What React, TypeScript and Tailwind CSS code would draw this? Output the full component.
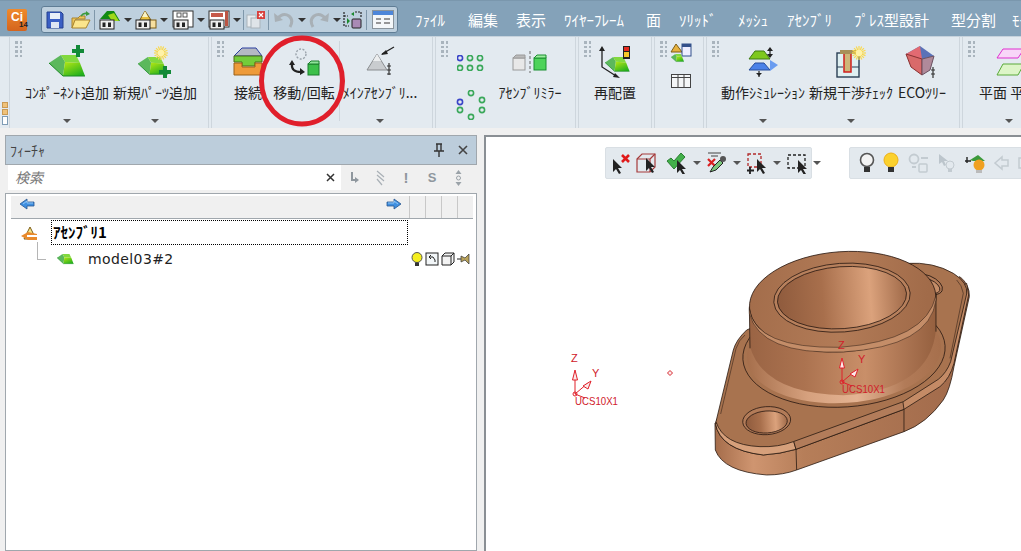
import React from "react";

const JP = { fontFamily: '"Noto Sans CJK JP", "Liberation Sans", sans-serif' };

function Caret({ dark }: { dark?: boolean }) {
  return <span className={`inline-block w-0 h-0 border-x-[4px] border-t-[4px] border-x-transparent ${dark ? "border-t-[#333]" : "border-t-[#555]"}`} />;
}

function Grip() {
  return (
    <div className="flex-none w-[7px] mt-[4px] ml-[5px] mr-[1px] grid grid-cols-2 gap-x-[2px] gap-y-[2px] content-start h-[18px]">
      {[0, 1, 2, 3, 4, 5, 6, 7].map((i) => (
        <span key={i} className="w-[2.5px] h-[2.5px] bg-[#a9b4bd]" />
      ))}
    </div>
  );
}

function Svg({ w, h, children, className }: { w: number; h: number; children: React.ReactNode; className?: string }) {
  return (
    <svg width={w} height={h} viewBox={`0 0 ${w} ${h}`} className={`flex-none ${className ?? ""}`}>
      {children}
    </svg>
  );
}

function Defs() {
  return (
    <svg width="0" height="0" className="absolute">
      <defs>
        <linearGradient id="gr" x1="0" y1="0" x2="0.7" y2="1">
          <stop offset="0" stopColor="#b8e814" />
          <stop offset="1" stopColor="#22b01c" />
        </linearGradient>
        <linearGradient id="cyl" x1="0" x2="1" y1="0" y2="0">
          <stop offset="0" stopColor="#9a6444" />
          <stop offset="0.3" stopColor="#ac7350" />
          <stop offset="0.62" stopColor="#c98f69" />
          <stop offset="0.85" stopColor="#a97250" />
          <stop offset="1" stopColor="#95603f" />
        </linearGradient>
        <linearGradient id="top" x1="0" x2="1" y1="0" y2="0.1">
          <stop offset="0" stopColor="#a26c4a" />
          <stop offset="0.55" stopColor="#b27b57" />
          <stop offset="1" stopColor="#a16b49" />
        </linearGradient>
        <linearGradient id="bore" x1="0" x2="1" y1="0" y2="0">
          <stop offset="0" stopColor="#8f5b3d" />
          <stop offset="0.35" stopColor="#a86f4c" />
          <stop offset="0.72" stopColor="#dba27c" />
          <stop offset="1" stopColor="#a06a49" />
        </linearGradient>
        <linearGradient id="fl" x1="0" x2="1" y1="0" y2="0">
          <stop offset="0" stopColor="#a66f4c" />
          <stop offset="0.3" stopColor="#d6a17e" />
          <stop offset="0.55" stopColor="#e4b392" />
          <stop offset="0.8" stopColor="#b27b58" />
          <stop offset="1" stopColor="#a66f4c" />
        </linearGradient>
        <linearGradient id="sd" x1="0" x2="1" y1="0" y2="0">
          <stop offset="0" stopColor="#a56d4b" />
          <stop offset="0.15" stopColor="#cf9570" />
          <stop offset="0.35" stopColor="#b67e59" />
          <stop offset="1" stopColor="#a0694a" />
        </linearGradient>
      </defs>
    </svg>
  );
}

function Wedge({ x = 0, y = 0, s = 1 }: { x?: number; y?: number; s?: number }) {
  return (
    <g transform={`translate(${x} ${y}) scale(${s})`}>
      <polygon points="0,8 12,0 16,7 14,21" fill="#5cb85c" />
      <polygon points="12,0 27,0 31,8 16,7" fill="#82d93e" />
      <polygon points="16,7 31,8 36,21 14,21" fill="url(#gr)" />
      <path d="M0 8L14 21H36" fill="none" stroke="#1a8a24" strokeWidth="1" />
    </g>
  );
}

function Plus({ x, y, s = 11 }: { x: number; y: number; s?: number }) {
  const t = s / 3;
  return <path d={`M${x - t / 2} ${y - s / 2}h${t}v${(s - t) / 2}h${(s - t) / 2}v${t}h${-(s - t) / 2}v${(s - t) / 2}h${-t}v${-(s - t) / 2}h${-(s - t) / 2}v${-t}h${(s - t) / 2}z`} fill="#128a38" />;
}

function Star({ x, y, r = 7 }: { x: number; y: number; r?: number }) {
  const lines = [0, 45, 90, 135, 22, 67, 112, 157];
  return (
    <g>
      {lines.map((a) => {
        const c = Math.cos((a * Math.PI) / 180) * r;
        const s = Math.sin((a * Math.PI) / 180) * r;
        return <line key={a} x1={x - c} y1={y - s} x2={x + c} y2={y + s} stroke="#f9d94f" strokeWidth="1.2" />;
      })}
      <circle cx={x} cy={y} r={r * 0.45} fill="#fff2a8" />
    </g>
  );
}

function HH({ x, y }: { x: number; y: number }) {
  return (
    <g>
      <rect x={x} y={y} width="14" height="9" fill="#eee" stroke="#222" />
      <rect x={x + 2.5} y={y + 2.5} width="3" height="4.5" fill="#222" />
      <rect x={x + 8} y={y + 2.5} width="3" height="4.5" fill="#222" />
    </g>
  );
}

function RBtn({ w, label, icon, caret, labelClass }: { w: string; label: string; icon: React.ReactNode; caret?: boolean; labelClass?: string }) {
  return (
    <div className={`flex-none flex flex-col items-center h-full ${w}`}>
      <div className="h-[40px] mt-[5px] flex items-center justify-center">{icon}</div>
      <div className={`mt-[-2px] h-[24px] leading-[24px] text-[14px] text-[#222] whitespace-nowrap ${labelClass ?? ""}`} style={JP}>
        {label}
      </div>
      {caret && <div className="mt-[15px] flex"><Caret /></div>}
    </div>
  );
}

function Group({ w, children }: { w: string; children: React.ReactNode }) {
  return (
    <div className={`flex-none flex h-full border-x border-[#ced6dd] bg-[#e3eaf0] ${w}`}>
      <Grip />
      {children}
    </div>
  );
}

function Dots({ pts }: { pts: [number, number, string][] }) {
  return (
    <>
      {pts.map(([x, y, c], i) => (
        <circle key={i} cx={x} cy={y} r="2.6" fill="none" stroke={c} strokeWidth="1.6" />
      ))}
    </>
  );
}

function Sep({ className }: { className?: string }) {
  return <span className={`flex-none w-px h-[20px] bg-[#7f97aa] ${className ?? "ml-[3px]"}`} />;
}

function Carets() {
  return (
    <span className="ml-[3px] flex">
      <Caret dark />
    </span>
  );
}

function QuickBar() {
  return (
    <div className="ml-[14px] flex items-center w-[357px] h-[27px] rounded-[3px] border border-[#5f7d95] bg-[#bed0de] pl-[4px]">
      <Svg w={18} h={18}>
        <path d="M1 1h14l2 2v14H1z" fill="#3a5fc4" stroke="#25408f" />
        <rect x="4" y="2" width="10" height="6" fill="#e8eef8" />
        <rect x="5" y="11" width="8" height="6" fill="#dfe6f3" />
      </Svg>
      <Svg w={20} h={18} className="ml-[7px]">
        <path d="M1 7h6l2-2h5v3H5L1 17z" fill="#eec65a" stroke="#a9842e" />
        <path d="M4 9h15l-4 8H1z" fill="#fbe58c" stroke="#a9842e" />
        <path d="M10 5Q13 1 17 3" stroke="#3c9a3c" strokeWidth="1.6" fill="none" />
        <path d="M15 0l4 3-4 2z" fill="#3c9a3c" />
      </Svg>
      <Sep />
      <Svg w={22} h={20} className="ml-[4px]">
        <polygon points="1,9 8,1 15,1 21,11 14,11 10,9" fill="#118a14" />
        <polygon points="9,5 15,3 20,11 13,11" fill="#9fd81a" />
        <HH x={1} y={10} />
      </Svg>
      <Carets />
      <Svg w={22} h={20} className="ml-[3px]">
        <polygon points="10,1 18,13 3,13" fill="#e8c040" stroke="#7d5d17" />
        <polygon points="10,1 13,7 7,7" fill="#f8f3c8" />
        <rect x="14" y="10" width="7" height="8" fill="#f6dfa0" stroke="#7d5d17" />
        <HH x={1} y={10} />
      </Svg>
      <Carets />
      <Svg w={22} h={20} className="ml-[4px]">
        <rect x="1" y="1" width="20" height="16" fill="#fff" stroke="#333" />
        <rect x="5" y="3" width="4" height="4" fill="#fff" stroke="#555" />
        <rect x="11" y="3" width="4" height="4" fill="#fff" stroke="#555" />
        <HH x={2} y={10} />
      </Svg>
      <Carets />
      <Svg w={22} h={20} className="ml-[3px]">
        <rect x="1" y="1" width="20" height="16" fill="#fff" stroke="#333" />
        <rect x="3" y="3" width="12" height="4" fill="#c65a4a" />
        <rect x="17" y="1" width="3" height="15" fill="#b54" />
        <HH x={2} y={10} />
      </Svg>
      <Carets />
      <Sep className="ml-[2px]" />
      <Svg w={19} h={19} className="ml-[2px]">
        <rect x="1" y="5" width="9" height="12" fill="#e9edf0" stroke="#aab3ba" />
        <rect x="5" y="8" width="9" height="10" fill="#dfe4e8" stroke="#aab3ba" />
        <rect x="11" y="1" width="8" height="8" fill="#d8403c" />
        <path d="M13 3l4 4M17 3l-4 4" stroke="#fff" strokeWidth="1.2" />
      </Svg>
      <Sep />
      <Svg w={22} h={18} className="ml-[4px]">
        <path d="M4 8Q10 1 16 5Q21 9 17 16" fill="none" stroke="#a8b0b6" strokeWidth="3" />
        <path d="M1 2l1 9 8-2z" fill="#a8b0b6" />
      </Svg>
      <Carets />
      <Svg w={22} h={18} className="ml-[2px]">
        <path d="M18 8Q12 1 6 5Q1 9 5 16" fill="none" stroke="#a8b0b6" strokeWidth="3" />
        <path d="M21 2l-1 9-8-2z" fill="#a8b0b6" />
      </Svg>
      <Carets />
      <Svg w={21} h={20} className="ml-[1px]">
        <path d="M2 6h4M2 2v14h5M13 2h6v5" fill="none" stroke="#222" strokeWidth="1.2" strokeDasharray="2 1" />
        <rect x="10" y="9" width="9" height="9" rx="1" fill="#a98ab5" stroke="#222" />
        <path d="M5 8l3 3-3 3zM12 2l-3 2 3 2z" fill="#1a8a2c" />
      </Svg>
      <Sep className="ml-[3px]" />
      <Svg w={22} h={19} className="ml-[5px]">
        <rect x="0.5" y="0.5" width="21" height="18" fill="#f4f7f9" stroke="#8a949c" />
        <rect x="1" y="1" width="20" height="4" fill="#4d86d9" />
        <path d="M4 9h5M12 9h6M4 13h5M12 13h6" stroke="#777" strokeWidth="1.4" />
      </Svg>
    </div>
  );
}

function Ribbon() {
  return (
    <div className="relative flex h-[92px] pl-[9px] gap-[2px] bg-[#e3eaf0] border-t border-[#c6d2dc]">
      <div className="absolute left-[2px] bottom-0 w-[6px] h-[26px] flex flex-col gap-px">
        <span className="h-[6px] bg-[#f0c27a] border border-[#c99a55]" />
        <span className="h-[6px] bg-[#f0c27a] border border-[#c99a55]" />
        <span className="h-[9px] bg-white border border-[#7f9cb5]" />
      </div>
      <Group w="w-[200px]">
        <RBtn w="w-[88px]" label="ｺﾝﾎﾟｰﾈﾝﾄ追加" caret icon={
          <Svg w={40} h={38}>
            <Wedge x={2} y={12} />
            <Plus x={31} y={8} s={12} />
          </Svg>
        } />
        <RBtn w="w-[88px]" label="新規ﾊﾟｰﾂ追加" caret icon={
          <Svg w={36} h={38}>
            <Wedge x={1} y={14} s={0.82} />
            <Star x={24} y={10} r={7} />
            <Plus x={28} y={29} s={12} />
          </Svg>
        } />
      </Group>
      <Group w="w-[222px]">
        <div className="flex-none w-[1px]" />
        <RBtn w="w-[44px]" label="接続" icon={
          <Svg w={30} h={30}>
            <path d="M1 9L9 1h14l6 8-6 0H5z" fill="#b5b9c2" stroke="#2a3fa0" />
            <path d="M1 9h28v6h-7v4H9v-4H1z" fill="#73cc3a" stroke="#4a6d16" />
            <path d="M1 16h8v4h13v-4h7v12H1z" fill="#ee9b3a" stroke="#9a6018" />
          </Svg>
        } />
        <RBtn w="w-[68px]" label="移動/回転" icon={
          <Svg w={32} h={30}>
            <circle cx="13" cy="7" r="5" fill="none" stroke="#9aa3ab" strokeWidth="1.4" strokeDasharray="2 1.5" />
            <path d="M4 17Q3 25 13 25" fill="none" stroke="#222" strokeWidth="2.2" />
            <path d="M1 18l3-5 3 5zM12 21v7l5-3z" fill="#222" />
            <rect x="20" y="17" width="11" height="11" fill="#3cc04a" stroke="#1a7f2c" />
            <polygon points="20,17 23,14 31,14 31,17" fill="#8fe39a" stroke="#1a7f2c" />
          </Svg>
        } />
        <div className="flex-none w-px h-[80px] mt-[4px] bg-[#ced6dd] ml-[1px]" />
        <RBtn w="w-[80px]" label="ﾒｲﾝｱｾﾝﾌﾞﾘ..." caret icon={
          <Svg w={32} h={32}>
            <polygon points="13,8 23,24 3,24" fill="#c9cccf" stroke="#8a8d90" />
            <polygon points="13,8 17,15 9,15" fill="#eceeef" />
            <path d="M30 1L18 8" stroke="#222" strokeWidth="1.3" />
            <path d="M17 9l5-5 2 4z" fill="#222" />
            <path d="M25 17v12M23 20h4M23 24h4M23 28h4" stroke="#333" strokeWidth="1.2" fill="none" />
          </Svg>
        } />
      </Group>
      <Group w="w-[141px]">
        <div className="flex-none w-[46px] ml-[1px] flex flex-col items-center pt-[18px] gap-[19px]">
          <Svg w={32} h={16}>
            <Dots pts={[[3, 3, "#3a45c8"], [13, 3, "#3aa85a"], [23, 3, "#3aa85a"], [3, 13, "#3aa85a"], [13, 13, "#3aa85a"], [23, 13, "#3aa85a"]]} />
          </Svg>
          <Svg w={34} h={30}>
            <Dots pts={[[15, 3, "#3aa85a"], [4, 12, "#3a45c8"], [26, 10, "#3aa85a"], [4, 20, "#3aa85a"], [26, 20, "#3aa85a"], [15, 27, "#3aa85a"]]} />
          </Svg>
        </div>
        <RBtn w="w-[68px]" label="ｱｾﾝﾌﾞﾘﾐﾗｰ" labelClass="text-[12.5px]" icon={
          <Svg w={36} h={24}>
            <rect x="1" y="8" width="12" height="12" fill="#e8e8e8" stroke="#9a9a9a" />
            <polygon points="1,8 4,5 13,5 13,8" fill="#bbb" stroke="#9a9a9a" />
            <path d="M18 1v22" stroke="#666" strokeDasharray="3 2" />
            <rect x="22" y="8" width="12" height="12" fill="#4ed35a" stroke="#1a8f30" />
            <polygon points="22,8 25,5 34,5 34,8" fill="#9ded9f" stroke="#1a8f30" />
          </Svg>
        } />
      </Group>
      <Group w="w-[74px]">
        <RBtn w="w-[46px]" label="再配置" icon={
          <Svg w={34} h={34}>
            <path d="M4 4v18l14 9" fill="none" stroke="#222" strokeWidth="1.3" />
            <path d="M4 1l3 5H1zM22 33l-7-1 2-4z" fill="#222" />
            <Wedge x={7} y={12} s={0.68} />
            <rect x="25" y="1" width="7" height="13" fill="#222" />
            <rect x="26" y="2" width="5" height="4" fill="#e62b20" />
            <rect x="26" y="7" width="5" height="5" fill="#f6c829" />
          </Svg>
        } />
      </Group>
      <Group w="w-[50px]">
        <div className="ml-[1px] flex flex-col items-center pt-[6px] gap-[11px] w-[24px]">
          <Svg w={22} h={20}>
            <polygon points="6,1 12,9 1,9" fill="#e7b23f" stroke="#7d5d17" />
            <rect x="12" y="1" width="9" height="12" fill="#eef" stroke="#33508a" />
            <rect x="12" y="1" width="9" height="3" fill="#33508a" />
            <Wedge x={1} y={11} s={0.36} />
          </Svg>
          <Svg w={20} h={14}>
            <rect x="0.5" y="0.5" width="19" height="13" fill="#f4f6f7" stroke="#444" />
            <path d="M0 3.5h20M7 1v12M13 1v12" stroke="#444" />
          </Svg>
        </div>
      </Group>
      <Group w="w-[254px]">
        <RBtn w="w-[86px]" label="動作ｼﾐｭﾚｰｼｮﾝ" caret icon={
          <Svg w={32} h={32}>
            <polygon points="8,5 17,5 23,13 2,13" fill="#7ec81e" stroke="#3c7a12" />
            <polygon points="8,17 17,17 23,24 2,24" fill="#4c82e8" stroke="#2a4f9a" />
            <polygon points="23,14 31,19 23,25" fill="#6a9cf0" />
            <path d="M23 3v8M12 25v6" stroke="#222" strokeWidth="1.2" />
            <path d="M20 5l3-4 3 4zM20 8l3 4 3-4zM9 27l3 3 3-3z" fill="#222" />
          </Svg>
        } />
        <RBtn w="w-[90px]" label="新規干渉ﾁｪｯｸ" caret icon={
          <Svg w={32} h={34}>
            <rect x="2" y="8" width="22" height="24" fill="#dff0f2" stroke="#2a3f55" strokeWidth="1.4" />
            <path d="M2 22h6M17 22h7" stroke="#2a3f55" />
            <rect x="9" y="8" width="7" height="19" fill="#cdb679" stroke="#d01e1e" strokeWidth="1.5" />
            <rect x="5" y="5" width="16" height="4" fill="#a89058" />
            <Star x={24} y={8} r={7} />
          </Svg>
        } />
        <RBtn w="w-[52px]" label="ECOﾂﾘｰ" icon={
          <Svg w={36} h={34}>
            <polygon points="16,1 30,11 18,14 2,9" fill="#5a72b8" />
            <polygon points="2,9 16,1 18,14" fill="#e26a72" />
            <polygon points="2,9 18,14 18,30 7,22" fill="#d96a6a" stroke="#8a3030" />
            <polygon points="18,14 30,11 26,25 18,30" fill="#b08a9a" stroke="#6a5060" />
            <path d="M29 22v11M27 25h4M27 29h4" stroke="#333" strokeWidth="1.2" />
          </Svg>
        } />
      </Group>
      <Group w="w-[70px]">
        <RBtn w="w-[66px]" label="平面 平" labelClass="self-start ml-[3px]" caret icon={
          <Svg w={30} h={32}>
            <polygon points="9,3 30,3 24,12 3,12" fill="#f8d6f8" stroke="#e030d0" />
            <polygon points="9,18 30,18 24,29 3,29" fill="#ddf5c8" stroke="#5aaa3a" />
          </Svg>
        } />
      </Group>
    </div>
  );
}

const menus: [string, string][] = [
  ["ﾌｧｲﾙ", "w-[53px]"],
  ["編集", "w-[48px]"],
  ["表示", "w-[48px]"],
  ["ﾜｲﾔｰﾌﾚｰﾑ", "w-[82px]"],
  ["面", "w-[33px]"],
  ["ｿﾘｯﾄﾞ", "w-[59px]"],
  ["ﾒｯｼｭ", "w-[49px]"],
  ["ｱｾﾝﾌﾞﾘ", "w-[67px]"],
  ["ﾌﾟﾚｽ型設計", "w-[97px]"],
  ["型分割", "w-[61px]"],
  ["ﾓｰﾙﾄﾞ", "w-[9px]"],
];

function TopBar() {
  return (
    <div className="flex items-center h-[36px] bg-[#84a2b9] pt-[2px] border-t border-[#7a97ad] overflow-hidden">
      <div className="ml-[7px] w-[20px] h-[22px] flex-none rounded-[2px] bg-gradient-to-b from-[#ef8a2c] to-[#d4641e] flex flex-col items-center justify-center leading-none relative">
        <span className="text-[12px] font-bold text-white" style={{ fontFamily: '"Liberation Sans", sans-serif' }}>Ci</span>
        <span className="text-[8px] font-bold text-[#222] self-end mr-[-1px] mt-[-2px]" style={{ fontFamily: '"Liberation Sans", sans-serif' }}>14</span>
      </div>
      <QuickBar />
      <div className="ml-[17px] flex text-[15px] text-white whitespace-nowrap" style={JP}>
        {menus.map(([m, w]) => (
          <span key={m} className={`leading-[20px] flex-none ${w}`}>{m}</span>
        ))}
      </div>
    </div>
  );
}

function SmallBtnIcon({ children }: { children: React.ReactNode }) {
  return <span className="w-[26px] flex justify-center items-center">{children}</span>;
}

function Arrow({ dir }: { dir: "left" | "right" }) {
  return (
    <Svg w={16} h={12} className={dir === "right" ? "" : "-scale-x-100"}>
      <path d="M1 4h7V1l7 5-7 5V8H1z" fill="#3f8fe0" stroke="#28558f" strokeWidth="0.8" />
      <path d="M2 5h6V3l4 3" fill="none" stroke="#a8d4fb" strokeWidth="0.8" />
    </Svg>
  );
}

function Panel() {
  return (
    <div className="flex-none w-[472px] ml-[5px] flex flex-col h-full">
      <div className="h-[30px] bg-[#bccddb] border border-[#a0a7ad] flex items-center px-[4px] shrink-0">
        <span className="text-[14px] text-[#444]" style={JP}>ﾌｨｰﾁｬ</span>
        <span className="ml-auto mr-[12px]">
          <Svg w={12} h={14}>
            <path d="M3 1h6M4 1v7h4V1M1 8h10M6 8v6" stroke="#333" strokeWidth="1.4" fill="none" />
          </Svg>
        </span>
        <span className="mr-[3px]">
          <Svg w={12} h={12}>
            <path d="M2 2l8 8M10 2l-8 8" stroke="#444" strokeWidth="1.6" />
          </Svg>
        </span>
      </div>
      <div className="h-[27px] flex items-start shrink-0 pl-[3px]">
        <div className="w-[333px] h-[25px] bg-white flex items-center pl-[7px] pr-[6px]">
          <span className="text-[14px] italic text-[#777]" style={JP}>検索</span>
          <span className="ml-auto">
            <Svg w={9} h={9}>
              <path d="M1 1l7 7M8 1L1 8" stroke="#333" strokeWidth="1.5" />
            </Svg>
          </span>
        </div>
        <div className="flex h-[25px] text-[#8f979e]">
          <SmallBtnIcon><Svg w={9} h={13}><path d="M2 1v8h4" stroke="#8f979e" strokeWidth="2" fill="none" /><path d="M5 6l4 3-4 3z" fill="#8f979e" /></Svg></SmallBtnIcon>
          <SmallBtnIcon><Svg w={9} h={16}><path d="M1 1l7 6M1 5l7 6M1 9l5 6" stroke="#a9b0b6" strokeWidth="1.2" /></Svg></SmallBtnIcon>
          <SmallBtnIcon><span className="text-[15px] font-bold leading-none" style={{ fontFamily: '"Liberation Sans", sans-serif' }}>!</span></SmallBtnIcon>
          <SmallBtnIcon><span className="text-[13px] font-bold leading-none" style={{ fontFamily: '"Liberation Sans", sans-serif' }}>S</span></SmallBtnIcon>
          <SmallBtnIcon><Svg w={7} h={16}><path d="M3.5 0l3 4h-6zM3.5 16l3-4h-6z" fill="#9aa2a8" /><circle cx="3.5" cy="8" r="2" fill="none" stroke="#9aa2a8" /></Svg></SmallBtnIcon>
        </div>
      </div>
      <div className="flex-1 mt-[1px] bg-white border border-[#a0a7ad] flex flex-col pt-[2px] pl-[5px] pr-[3px]">
        <div className="flex h-[23px] bg-[#f0f0f0] border-b border-[#a0a7ad] shrink-0">
          <div className="flex-1 flex items-start justify-between pt-[2px] pl-[8px] pr-[7px]">
            <Arrow dir="left" />
            <Arrow dir="right" />
          </div>
          {[0, 1, 2, 3].map((i) => (
            <span key={i} className="w-[16px] border-l border-[#c8c8c8]" />
          ))}
        </div>
        <div className="flex items-center h-[25px] mt-px">
          <Svg w={18} h={18} className="ml-[9px] mt-[2px]">
            <polygon points="10,2 16,14 4,14" fill="#f6e58a" stroke="#7d5d17" />
            <polygon points="1,11 8,7 17,9 17,15 8,15" fill="#e98a2c" />
            <rect x="7" y="10" width="10" height="2" fill="#fff" />
          </Svg>
          <div className="ml-[13px] w-[357px] h-[25px] border border-dotted border-black flex items-center pl-px text-[15px] font-bold text-black" style={JP}>
            ｱｾﾝﾌﾞﾘ1
          </div>
        </div>
        <div className="relative flex items-center h-[28px]">
          <span className="absolute left-[26px] top-[-3px] w-[9px] h-[18px] border-l border-b border-[#b5b5b5]" />
          <Svg w={18} h={11} className="ml-[46px]">
            <Wedge x={0} y={0} s={0.46} />
          </Svg>
          <span className="ml-[13px] text-[14px] text-[#222] tracking-[0.4px]" style={{ fontFamily: '"DejaVu Sans", sans-serif' }}>model03#2</span>
          <div className="ml-auto flex items-center gap-[2px] pr-[3px]">
            <Svg w={12} h={15}>
              <circle cx="6" cy="5.5" r="5" fill="#f5ee1e" stroke="#555" />
              <rect x="4" y="10.5" width="4" height="3.5" fill="#333" />
            </Svg>
            <Svg w={14} h={14}>
              <rect x="1" y="1" width="12" height="12" fill="#f2f6f8" stroke="#222" />
              <path d="M4 5h4l2 3v2M4 5l2-2M4 5l2 2" fill="none" stroke="#222" />
            </Svg>
            <Svg w={14} h={14}>
              <path d="M1 4l3-3h9v9l-3 3H1z" fill="#f3f3f3" stroke="#222" />
              <path d="M1 4h9v9M10 4l3-3" fill="none" stroke="#222" />
            </Svg>
            <Svg w={13} h={12}>
              <path d="M0 6h4" stroke="#222" />
              <polygon points="4,3 8,5 12,1 12,11 8,7 4,9" fill="#b9a25a" stroke="#333" strokeWidth="0.7" />
            </Svg>
          </div>
        </div>
      </div>
    </div>
  );
}

function VToolbar({ className, children }: { className: string; children: React.ReactNode }) {
  return <div className={`absolute top-[10px] h-[32px] bg-[#e3e9ee] rounded-[2px] border border-[#d9dfe4] flex items-center ${className}`}>{children}</div>;
}

function Cursor({ x, y, s = 1 }: { x: number; y: number; s?: number }) {
  return <path transform={`translate(${x} ${y}) scale(${s})`} d="M0 0l0 13 3-3 3 5 2-1-3-5h4z" fill="#222" />;
}

function Part() {
  return (
    <g transform="translate(700 250) scale(0.3333)" stroke="#2a1a12" strokeWidth="2.4" strokeLinejoin="round">
      {/* side wall */}
      <path d="M45 520 L46 600 Q70 665 200 675 Q250 675 290 660 L612 545 Q680 520 730 450 Q750 420 762 350 L808 140 Q810 105 780 80 Z" fill="url(#sd)" />
      <path d="M288 595 L290 660 M612 478 L612 545" fill="none" />
      {/* fillet bands */}
      <path d="M46 520 Q60 600 190 615 Q240 612 288 598 L612 478 L720 410 Q750 385 762 340 L806 135 L800 100 L500 300 L100 400 Z" fill="#c48b66" />
      <path d="M46 520 Q60 600 190 615 Q240 612 288 598 L280 570 L100 520 Z" fill="#d6a07b" />
      <path d="M288 598 L612 478 L608 450 L280 570 Z" fill="#b27c5a" />
      {/* top plate */}
      <path d="M48 515 L100 300 Q108 270 140 240 L620 40 Q700 35 760 70 Q805 98 800 132 L752 335 Q740 368 715 388 L610 455 L280 575 Q235 592 180 590 Q70 585 48 515 Z" fill="#a8734f" />
      <path d="M62 492 L108 296 Q116 270 135 255" fill="none" strokeWidth="1.6" />
      <path d="M750 325 L790 130 Q786 105 770 90" fill="none" strokeWidth="1.6" />
      {/* small holes */}
      <ellipse cx="200" cy="512" rx="72" ry="42" transform="rotate(-4 200 512)" fill="#b27b58" />
      <ellipse cx="200" cy="516" rx="62" ry="33" transform="rotate(-4 200 516)" fill="url(#bore)" />
      <ellipse cx="680" cy="103" rx="50" ry="27" transform="rotate(22 680 103)" fill="#b27b58" />
      <ellipse cx="682" cy="107" rx="40" ry="20" transform="rotate(22 682 107)" fill="#c48d68" />
      {/* flange */}
      <ellipse cx="432" cy="308" rx="304" ry="163" transform="rotate(-4 432 308)" fill="#a8734f" />
      <ellipse cx="432" cy="306" rx="292" ry="153" transform="rotate(-4 432 306)" fill="url(#fl)" stroke="none" />
      {/* cylinder */}
      <path d="M148 170 L150 290 Q190 430 430 436 Q690 420 708 240 L708 130 Z" fill="url(#cyl)" stroke="none" />
      <path d="M148 170 L150 295 M708 130 L708 245" fill="none" />
      <ellipse cx="428" cy="155" rx="280" ry="150" transform="rotate(-4 428 155)" fill="url(#top)" />
      <path d="M148 176 Q165 296 420 292 Q680 272 708 136 L708 150 Q690 290 430 306 Q180 315 148 190 Z" fill="#c48d68" strokeWidth="1.5" />
      <ellipse cx="426" cy="143" rx="205" ry="103" transform="rotate(-4 426 143)" fill="#b7805c" />
      <ellipse cx="426" cy="143" rx="194" ry="93" transform="rotate(-4 426 143)" fill="url(#bore)" />
    </g>
  );
}

function Ucs({ x, y, zy, yy, yx }: { x: number; y: number; zy: number; yy: number; yx: number }) {
  const font = "Liberation Sans, sans-serif";
  return (
    <g transform={`translate(${x} ${y})`} fill="none" stroke="#e0202a" strokeWidth="1">
      <path d="M0 0V-14M0 0l13-11M0 0l10 4" />
      <path d="M-2.5 -14L0 -24 2.5 -14Z" fill="#fbeaea" />
      <path d="M8 -8l8-5-3 8z" fill="#fbeaea" />
      <circle cx="0" cy="0" r="2" />
      <text x="-4" y={zy} fontSize="11" stroke="none" fill="#d0202a" fontFamily={font}>Z</text>
      <text x={yx} y={yy} fontSize="11" stroke="none" fill="#d0202a" fontFamily={font}>Y</text>
      <text x="0" y="11" fontSize="11.5" stroke="none" fill="#d0202a" fontFamily={font} textLength={43} lengthAdjust="spacingAndGlyphs">UCS10X1</text>
    </g>
  );
}

function Viewport() {
  return (
    <div className="relative flex-1 ml-[7px] bg-white border-l-2 border-t-2 border-[#8a8f94] overflow-hidden h-full">
      <svg width="536" height="415" viewBox="486 137 536 415" className="absolute left-0 top-0">
        <Part />
        <Ucs x={575} y={394} zy={-32} yy={-17} yx={17} />
        <Ucs x={842} y={382} zy={-33} yy={-19} yx={16} />
        <path d="M670 370.5l2.5 2.5-2.5 2.5-2.5-2.5z" fill="#fbeaea" stroke="#d7262e" />
      </svg>
      <VToolbar className="left-[119px] w-[207px] pl-[5px] gap-[5px]">
        <Svg w={20} h={22}>
          <Cursor x={2} y={7} />
          <path d="M11 3l7 7M18 3l-7 7" stroke="#e01a1a" strokeWidth="2.6" />
        </Svg>
        <Svg w={20} h={20}>
          <path d="M1 6L6 1h13v13l-5 5H1z" fill="none" stroke="#a53a3a" strokeWidth="1.2" />
          <path d="M1 6h13v13M14 6l5-5" fill="none" stroke="#a53a3a" strokeWidth="1.2" />
          <Cursor x={10} y={5} />
        </Svg>
        <span className="w-px h-[24px] bg-[#9aa2a8]" />
        <Svg w={22} h={22}>
          <path d="M1 9l4-3 3 3 7-8 4 4-11 12z" fill="#42b04a" stroke="#2c7d33" />
          <Cursor x={11} y={8} />
        </Svg>
        <Caret />
        <Svg w={22} h={22}>
          <path d="M2 1h13M5 4h7" stroke="#444" />
          <path d="M2 7l7 7M9 7l-7 7" stroke="#d92020" strokeWidth="2.2" />
          <path d="M4 20l3-5 7-7 3 3-7 7z" fill="#7dc77d" stroke="#222" />
          <circle cx="17" cy="7" r="3" fill="#555" />
        </Svg>
        <Caret />
        <Svg w={22} h={22}>
          <rect x="2" y="2" width="13" height="13" fill="none" stroke="#b22a2a" strokeWidth="1.3" strokeDasharray="3 2" />
          <path d="M4 15v7M1 18.5h7" stroke="#222" strokeWidth="1.8" />
          <Cursor x={11} y={7} />
        </Svg>
        <Caret />
        <Svg w={22} h={22}>
          <rect x="2" y="3" width="17" height="13" fill="none" stroke="#222" strokeWidth="1.3" strokeDasharray="3 2" />
          <Cursor x={12} y={8} />
        </Svg>
        <Caret />
      </VToolbar>
      <VToolbar className="left-[363px] w-[200px] pl-[9px] gap-[8px]">
        <Svg w={16} h={22}>
          <circle cx="8" cy="8" r="6.5" fill="#f3f3f3" stroke="#555" strokeWidth="1.6" />
          <rect x="5" y="15" width="6" height="5" fill="#333" />
        </Svg>
        <Svg w={16} h={22}>
          <circle cx="8" cy="8" r="7" fill="#fbd12e" stroke="#eeb015" />
          <rect x="5" y="15" width="6" height="5" fill="#333" />
        </Svg>
        <Svg w={22} h={20} className="ml-[1px]">
          <circle cx="6" cy="6" r="4.5" fill="none" stroke="#c3cbd1" strokeWidth="1.8" />
          <rect x="11" y="11" width="8" height="8" rx="1" fill="none" stroke="#c3cbd1" strokeWidth="1.5" />
          <path d="M13 5h7M4 14h4" stroke="#c3cbd1" strokeWidth="1.8" />
        </Svg>
        <Svg w={18} h={20}>
          <path d="M1 1v10l3-2 2 4 2-1-2-4h4z" fill="#bcc5cc" />
          <circle cx="12" cy="12" r="4" fill="none" stroke="#c3cbd1" />
          <rect x="10" y="16" width="4" height="3" fill="#c3cbd1" />
        </Svg>
        <Svg w={22} h={22}>
          <path d="M6 8l8-5 7 6H9z" fill="#3b9a3b" />
          <circle cx="15" cy="13" r="5.5" fill="#f0a020" />
          <rect x="12" y="18" width="6" height="3" fill="#bbb" />
          <path d="M1 9h6M3 5v6" stroke="#222" strokeWidth="1.4" />
        </Svg>
        <Svg w={16} h={16}>
          <path d="M1 8l7-6v3h6v6H8v3z" fill="none" stroke="#c3cbd1" strokeWidth="1.5" />
        </Svg>
        <Svg w={16} h={16}>
          <rect x="1" y="3" width="10" height="10" fill="none" stroke="#c3cbd1" strokeWidth="1.5" />
        </Svg>
      </VToolbar>
    </div>
  );
}

export default function App() {
  return (
    <div className="relative w-[1021px] h-[551px] overflow-hidden bg-[#f0f0f0]" style={{ fontFamily: '"Noto Sans CJK JP", sans-serif' }}>
      <Defs />
      <TopBar />
      <Ribbon />
      <div className="flex h-[416px] mt-[7px]">
        <Panel />
        <Viewport />
      </div>
      <svg width="100" height="100" viewBox="0 0 100 100" className="absolute left-[252px] top-[31px]">
        <ellipse cx="50" cy="50" rx="40.5" ry="43" fill="none" stroke="#e01f2b" strokeWidth="5" />
      </svg>
    </div>
  );
}
